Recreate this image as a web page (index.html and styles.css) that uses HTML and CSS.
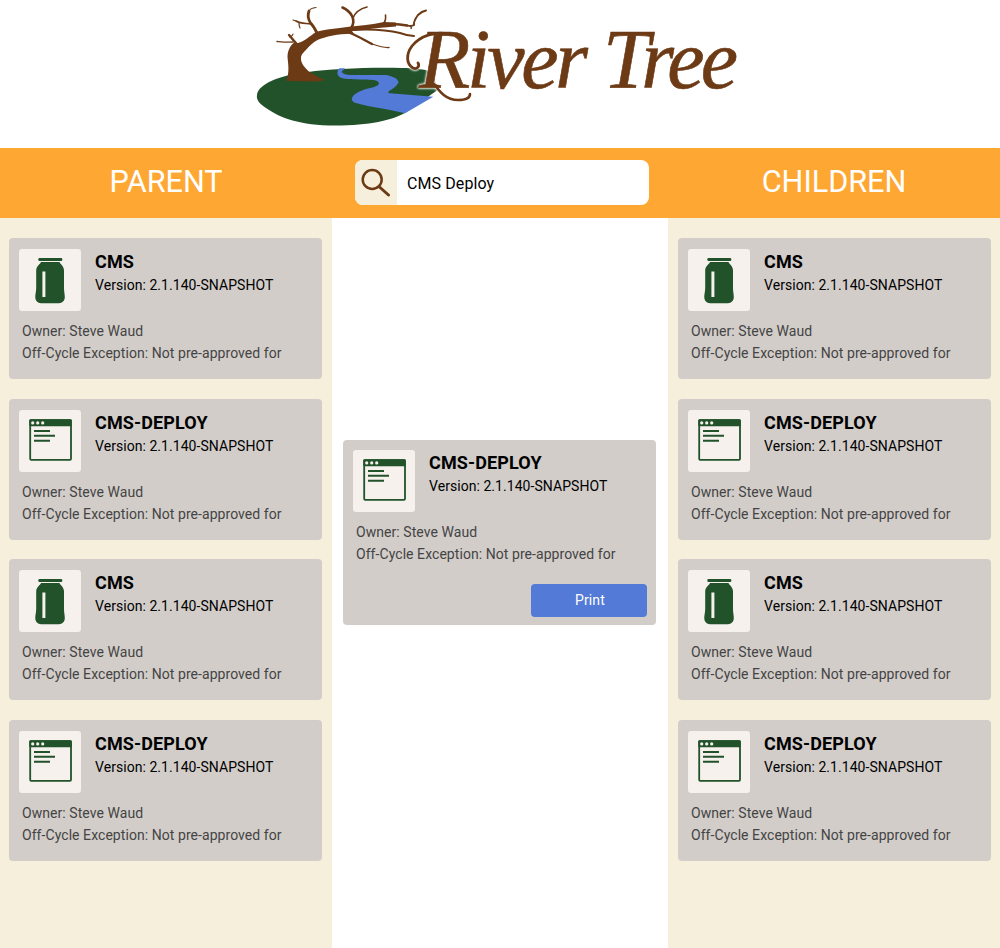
FILE: index.html
```html
<!DOCTYPE html>
<html lang="en">
<head>
<meta charset="utf-8">
<title>River Tree</title>
<link rel="stylesheet" href="styles.css">
</head>
<body>
<svg class="defs" width="0" height="0" aria-hidden="true">
  <symbol id="jar" viewBox="0 0 62 62">
    <rect x="19.3" y="9" width="24" height="3" rx="1.200" fill="#21522a"/>
    <path fill="#21522a" d="M22 13H40.500C41.500 15.500 45 17 45 21.500V38C45 43 45.800 45 45.800 48C45.800 52 43 54.200 40 54.200H22C19 54.200 16.300 52 16.300 48C16.300 45 17.200 43 17.200 38V21.500C17.200 17 21 15.500 22 13Z"/>
    <rect x="23.400" y="22.500" width="3" height="25.500" fill="#f6f1ec"/>
  </symbol>
  <symbol id="win" viewBox="0 0 62 62">
    <rect x="11.200" y="10.200" width="40.800" height="39.600" rx="1" fill="none" stroke="#21522a" stroke-width="1.800"/>
    <rect x="10.300" y="9.300" width="42.400" height="7" rx="1" fill="#21522a"/>
    <circle cx="13.700" cy="12.900" r="1.600" fill="#f6f1ec"/>
    <circle cx="18.700" cy="12.900" r="1.600" fill="#f6f1ec"/>
    <circle cx="23.700" cy="12.900" r="1.600" fill="#f6f1ec"/>
    <path d="M15 21H31M15 25.700H36M15 30.700H31" stroke="#21522a" stroke-width="1.900" fill="none"/>
  </symbol>
</svg>

<header class="logo-bar">
  <svg class="logo" viewBox="250 0 500 135" width="500" height="135" role="img" aria-label="River Tree logo">
    <path fill="#21522a" d="M257 95C258 84 280 75 308 72C330 69 370 67 402 68C415 68 425 69 430 72L439 89L405 113C392 120 370 125.500 335 125.500C300 125.500 280 118 266 108C260 104 256 100 257 95Z"/>
    <path fill="#527ad6" d="M339.300 68.300C337 71 336.500 75 340 77.300C344 79.500 350 79.300 373.300 80C378 80.500 380 82.500 378.300 85C375 87.500 368 88 363.300 90C358 92 353 94 351.700 99C352 101.500 354 102.500 356.700 103.300C370 107 383 108 405 113.300L433.300 96.700L390 93.300C388 92.800 388 92 388.300 91.700C392 89 396 87 396.700 85C398.500 83 399 82 398.300 81.700C397.500 79 395.500 78 393.300 77.300C390 75.500 387 75 383.300 75H350C347 75 344.500 74.500 343.300 73.300C342 72.500 341.500 72 341.700 71.700L345 68.300Z"/>
    <path fill="#6d3a16" d="M286 81C290 73 288 63 287.500 57C287.500 51 290 46 293.500 43L298 43C304 41.500 310 36 316 32C325 29 338 28.500 347 27C360 25.500 372 24.500 384 22L396 22.500L396 26.500L384 27.500C372 28.500 362 30 352 31L354 33.800C346 33.500 339 34.500 333 35.500C326 37 321 38.500 318 39.800C313 42.500 310 45.500 307 48.800C304 52 301 54.500 301 58C300.500 63 305.500 69 311 73C316 76 321 78.500 325 80L318 81.500Z"/>
    <g fill="none" stroke="#6d3a16" stroke-linecap="round" stroke-linejoin="round">
      <path stroke-width="2.400" d="M384 24.500C392 23.500 400 24 407 25.500"/>
      <path stroke-width="2" d="M350 30C366 29 384 29 400 33C404 34.500 408 35.500 414 36"/>
      <path stroke-width="2.400" d="M350 33C358 36 366 41 372 44"/>
      <path stroke-width="1.300" d="M372 44C378 46 384 48 389 47.500"/>
      <path stroke-width="2.800" d="M317 33C315 29 313.500 26 310.500 23C308 19 307.500 15 309 11"/>
      <path stroke-width="1.200" d="M309 11C310 9 312 8 316 7.500"/>
      <path stroke-width="1.600" d="M311 24C306 23 301 24 296 21"/>
      <path stroke-width="1.200" d="M299 23C299 25 299 26 300 28M296 21L293 20"/>
      <path stroke-width="2.600" d="M351 28C354 24 354 20 352 16C350 12 347 9.500 342.500 7.500"/>
      <path stroke-width="1.600" d="M353 18C355 13 359 9 367 7"/>
      <path stroke-width="1.600" d="M383 24C385 22 386 19 385.500 15"/>
      <path stroke-width="2" d="M407 25.500C410 26 412 26.500 414 25C413.500 22 415 19 418 15C420 13 423 11 426 10.500"/>
      <path stroke-width="1.300" d="M410 26C411 27 412 28 411 28.500"/>
      <path stroke-width="2.400" d="M296 43C293 40 291 37 289 35"/>
      <path stroke-width="1.400" d="M293 42C288 42.500 283 42 277 41.500"/>
      <path stroke-width="1.200" d="M290 37C292 36 293 35 293 34"/>
    </g>
    <g class="logo-word">
      <text class="logo-text" x="419" y="88" textLength="169" lengthAdjust="spacing">River</text>
      <text class="logo-text" x="603" y="88" textLength="135" lengthAdjust="spacing">Tree</text>
      <path class="swash" stroke-width="2.800" d="M448 34C435 31 420 36 412 46C406 54 406 64 413 68C417 70 420 66 418 63"/>
      <path class="swash" stroke-width="2.600" d="M434 84C440 92 446 100 458 100C465 100 470 98 470 94"/>
    </g>
  </svg>
</header>

<section class="top-bar">
  <h2 class="side-title">PARENT</h2>
  <div class="search-cell">
    <div class="search">
      <span class="search-icon">
        <svg viewBox="0 0 30 30" width="30" height="30">
          <circle cx="11.200" cy="12.500" r="9.500" fill="none" stroke="#6d3a16" stroke-width="2.500"/>
          <path d="M18.500 20L27.500 28" stroke="#6d3a16" stroke-width="3" stroke-linecap="round"/>
        </svg>
      </span>
      <span class="search-text">CMS Deploy</span>
    </div>
  </div>
  <h2 class="side-title">CHILDREN</h2>
</section>

<main class="columns">
  <div class="col side">
    <article class="card">
      <div class="card-head"><div class="icon"><svg class="glyph"><use href="#jar"/></svg></div><div><h3 class="name">CMS</h3><p class="version">Version: 2.1.140-SNAPSHOT</p></div></div>
      <p class="meta">Owner: Steve Waud</p><p class="meta">Off-Cycle Exception: Not pre-approved for</p>
    </article>
    <article class="card">
      <div class="card-head"><div class="icon"><svg class="glyph"><use href="#win"/></svg></div><div><h3 class="name">CMS-DEPLOY</h3><p class="version">Version: 2.1.140-SNAPSHOT</p></div></div>
      <p class="meta">Owner: Steve Waud</p><p class="meta">Off-Cycle Exception: Not pre-approved for</p>
    </article>
    <article class="card">
      <div class="card-head"><div class="icon"><svg class="glyph"><use href="#jar"/></svg></div><div><h3 class="name">CMS</h3><p class="version">Version: 2.1.140-SNAPSHOT</p></div></div>
      <p class="meta">Owner: Steve Waud</p><p class="meta">Off-Cycle Exception: Not pre-approved for</p>
    </article>
    <article class="card">
      <div class="card-head"><div class="icon"><svg class="glyph"><use href="#win"/></svg></div><div><h3 class="name">CMS-DEPLOY</h3><p class="version">Version: 2.1.140-SNAPSHOT</p></div></div>
      <p class="meta">Owner: Steve Waud</p><p class="meta">Off-Cycle Exception: Not pre-approved for</p>
    </article>
  </div>

  <div class="col center">
    <article class="card selected">
      <div class="card-head"><div class="icon"><svg class="glyph"><use href="#win"/></svg></div><div><h3 class="name">CMS-DEPLOY</h3><p class="version">Version: 2.1.140-SNAPSHOT</p></div></div>
      <p class="meta">Owner: Steve Waud</p><p class="meta">Off-Cycle Exception: Not pre-approved for</p>
      <div class="actions"><button class="print" type="button">Print</button></div>
    </article>
  </div>

  <div class="col side">
    <article class="card">
      <div class="card-head"><div class="icon"><svg class="glyph"><use href="#jar"/></svg></div><div><h3 class="name">CMS</h3><p class="version">Version: 2.1.140-SNAPSHOT</p></div></div>
      <p class="meta">Owner: Steve Waud</p><p class="meta">Off-Cycle Exception: Not pre-approved for</p>
    </article>
    <article class="card">
      <div class="card-head"><div class="icon"><svg class="glyph"><use href="#win"/></svg></div><div><h3 class="name">CMS-DEPLOY</h3><p class="version">Version: 2.1.140-SNAPSHOT</p></div></div>
      <p class="meta">Owner: Steve Waud</p><p class="meta">Off-Cycle Exception: Not pre-approved for</p>
    </article>
    <article class="card">
      <div class="card-head"><div class="icon"><svg class="glyph"><use href="#jar"/></svg></div><div><h3 class="name">CMS</h3><p class="version">Version: 2.1.140-SNAPSHOT</p></div></div>
      <p class="meta">Owner: Steve Waud</p><p class="meta">Off-Cycle Exception: Not pre-approved for</p>
    </article>
    <article class="card">
      <div class="card-head"><div class="icon"><svg class="glyph"><use href="#win"/></svg></div><div><h3 class="name">CMS-DEPLOY</h3><p class="version">Version: 2.1.140-SNAPSHOT</p></div></div>
      <p class="meta">Owner: Steve Waud</p><p class="meta">Off-Cycle Exception: Not pre-approved for</p>
    </article>
  </div>
</main>
</body>
</html>
```
FILE: styles.css
```css
* { box-sizing: border-box; }
html, body { margin: 0; padding: 0; }
body {
  width: 1000px;
  height: 948px;
  overflow: hidden;
  background: #fff;
  font-family: Roboto, "Liberation Sans", sans-serif;
  color: #000;
}
.defs { display: block; height: 0; }

.logo-bar { height: 148px; display: flex; justify-content: center; }
.logo { display: block; }
.logo-word { filter: drop-shadow(0 0 1px #fff) drop-shadow(0 0 1px #fff); }
.logo-text {
  font-family: "Liberation Serif", serif;
  font-style: italic;
  font-size: 84px;
  fill: #6d3a16;
  stroke: #6d3a16;
  stroke-width: 0.6px;
}
.swash { fill: none; stroke: #6d3a16; stroke-linecap: round; }

.top-bar {
  height: 70px;
  background: #ffa733;
  display: grid;
  grid-template-columns: 332px 336px 332px;
  align-items: center;
}
.side-title {
  margin: -2px 0 0;
  text-align: center;
  color: #fff;
  font-size: 30.6px;
  font-weight: 400;
  line-height: 36px;
}
.search-cell { padding: 0 19px 2px 23px; }
.search {
  height: 45px;
  display: flex;
  align-items: center;
  background: #fff;
  border-radius: 8px;
  overflow: hidden;
}
.search-icon {
  width: 42px;
  height: 100%;
  background: #f5efdc;
  display: flex;
  align-items: center;
  justify-content: center;
  flex: none;
}
.search-text { margin: 2px 0 0 10px; font-size: 16px; letter-spacing: 0.1px; }

.columns {
  display: grid;
  grid-template-columns: 332px 336px 332px;
  height: 730px;
}
.col.side { background: #f5efdc; padding: 20px 10px 0 9px; }
.col.side:last-child { padding-left: 10px; padding-right: 9px; }
.col.center { background: #fff; padding: 222px 12px 0 11px; }

.card {
  background: #d2cdc9;
  border-radius: 4px;
  height: 141px;
  margin-bottom: 19.67px;
  padding: 11px 10px 0;
}
.card.selected { height: 185px; margin: 0; padding-top: 10px; }
.card-head { display: flex; gap: 14px; margin-bottom: 9px; height: 62px; }
.icon {
  width: 62px;
  height: 62px;
  flex: none;
  background: #f6f1ec;
  border-radius: 3px;
}
.glyph { display: block; width: 62px; height: 62px; }
.name {
  margin: 1px 0 0;
  font-size: 18px;
  font-weight: 700;
  line-height: 24px;
  letter-spacing: 0.12px;
}
.version { margin: 0; font-size: 14px; line-height: 22px; letter-spacing: 0.05px; }
.meta {
  margin: 0 0 0 3px;
  font-size: 14px;
  line-height: 22px;
  color: #444;
  letter-spacing: 0.06px;
}
.actions { display: flex; justify-content: flex-end; margin: 19px -1px 0 0; }
.print {
  width: 116px;
  height: 33px;
  border: 0;
  border-radius: 4px;
  background: #527ad6;
  color: #fff;
  padding: 0 0 2px 2px;
  font: 400 14px Roboto, "Liberation Sans", sans-serif;
  letter-spacing: 0.1px;
}
```
